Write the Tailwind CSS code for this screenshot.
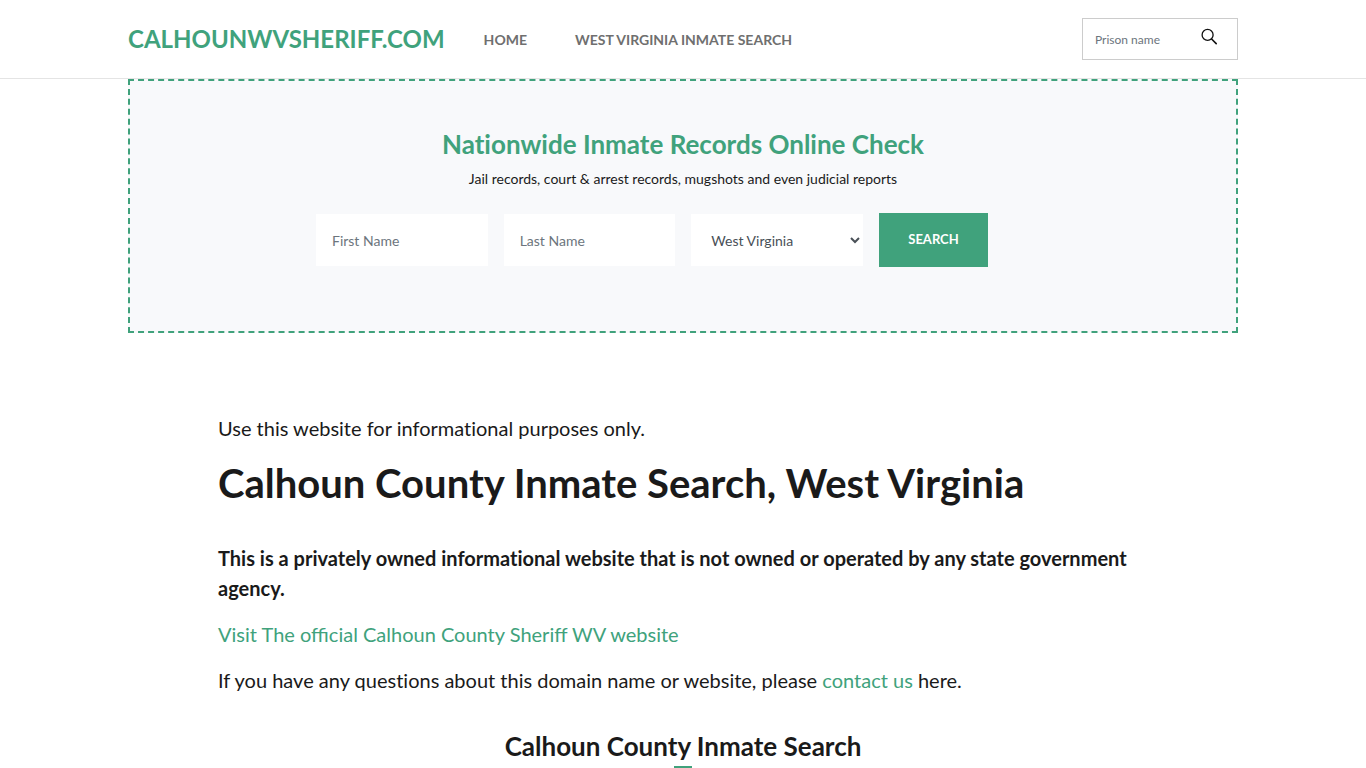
<!DOCTYPE html>
<html lang="en">
<head>
  <meta charset="UTF-8" />
  <meta name="viewport" content="width=device-width, initial-scale=1.0" />
  <title>Calhoun County Inmate Search, West Virginia</title>
  <script src="https://cdn.jsdelivr.net/npm/@tailwindcss/browser@4"></script>
</head>
<body class="overflow-x-hidden bg-white font-['Lato',sans-serif] text-[#1a1a1a]">

  <!-- Header -->
  <header class="border-b border-[#e4e4e4]">
    <div class="mx-auto flex h-[78px] max-w-[1110px] items-center">
      <a href="#" class="text-2xl font-bold text-[#40a27c]">CALHOUNWVSHERIFF.COM</a>
      <nav class="ml-[39px] flex gap-12 pt-0.5 text-sm font-bold text-[#6f6f6f]">
        <a href="#">HOME</a>
        <a href="#">WEST VIRGINIA INMATE SEARCH</a>
      </nav>
      <form class="ml-auto flex h-[42px] w-[156px] border border-[#cccccc]">
        <input type="text" aria-label="Prison name" placeholder="Prison name" class="w-28 pt-0.5 pl-3 text-xs outline-none placeholder:text-[#6c757d]" />
        <button type="submit" aria-label="Search" class="flex pt-2 pl-1">
          <svg class="h-5 w-5" viewBox="0 0 20 20" fill="none" stroke="#111" stroke-width="1.3">
            <circle cx="8.6" cy="7.9" r="5.5" />
            <path d="M12.6 12l4.6 4.6" stroke-linecap="round" stroke-width="1.6" />
          </svg>
        </button>
      </form>
    </div>
  </header>

  <main>
    <!-- Records search -->
    <section class="mx-auto max-w-[1110px] border-2 border-dashed border-[#40a27c] bg-[#f8f9fb] pt-[47px] pb-16 text-center">
      <h2 class="text-[26px] leading-8 font-bold text-[#40a27c] [font-variant-ligatures:none]">Nationwide Inmate Records Online Check</h2>
      <p class="mt-[7px] text-sm leading-6">Jail records, court &amp; arrest records, mugshots and even judicial reports</p>
      <form class="mx-auto mt-[22px] grid max-w-[734px] grid-cols-[1fr_1fr_1fr_109px] items-center gap-4 pr-[62px] text-sm">
        <input type="text" aria-label="First name" placeholder="First Name" class="h-[52px] min-w-0 bg-white px-4 outline-none placeholder:text-[#6c757d]" />
        <input type="text" aria-label="Last name" placeholder="Last Name" class="h-[52px] min-w-0 bg-white px-4 outline-none placeholder:text-[#6c757d]" />
        <select aria-label="State" class="h-[52px] min-w-0 bg-white pl-4 text-[#495057] outline-none">
          <option>West Virginia</option>
        </select>
        <button type="submit" class="h-[54px] bg-[#40a27c] pb-0.5 text-[13px] font-bold text-white">SEARCH</button>
      </form>
    </section>

    <!-- Article -->
    <article class="mx-auto mt-20 max-w-[930px] text-xl leading-[30px]">
      <p class="[font-variant-ligatures:none]">Use this website for informational purposes only.</p>
      <h1 class="mt-4 text-[40px] leading-[48px] font-bold">Calhoun County Inmate Search, West Virginia</h1>
      <p class="mt-9 font-bold [font-variant-ligatures:none]">This is a privately owned informational website that is not owned or operated by any state government agency.</p>
      <p class="mt-4"><a href="#" class="text-[#40a27c]">Visit The official Calhoun County Sheriff WV website</a></p>
      <p class="mt-4 [font-variant-ligatures:none]">If you have any questions about this domain name or website, please <a href="#" class="text-[#40a27c]">contact us</a> here.</p>
      <h2 class="mt-[35px] flex flex-col items-center text-[26px] leading-8 font-bold">
        Calhoun County Inmate Search
        <span class="mt-1 h-0.5 w-[18px] bg-[#40a27c]"></span>
      </h2>
    </article>
  </main>
</body>
</html>
